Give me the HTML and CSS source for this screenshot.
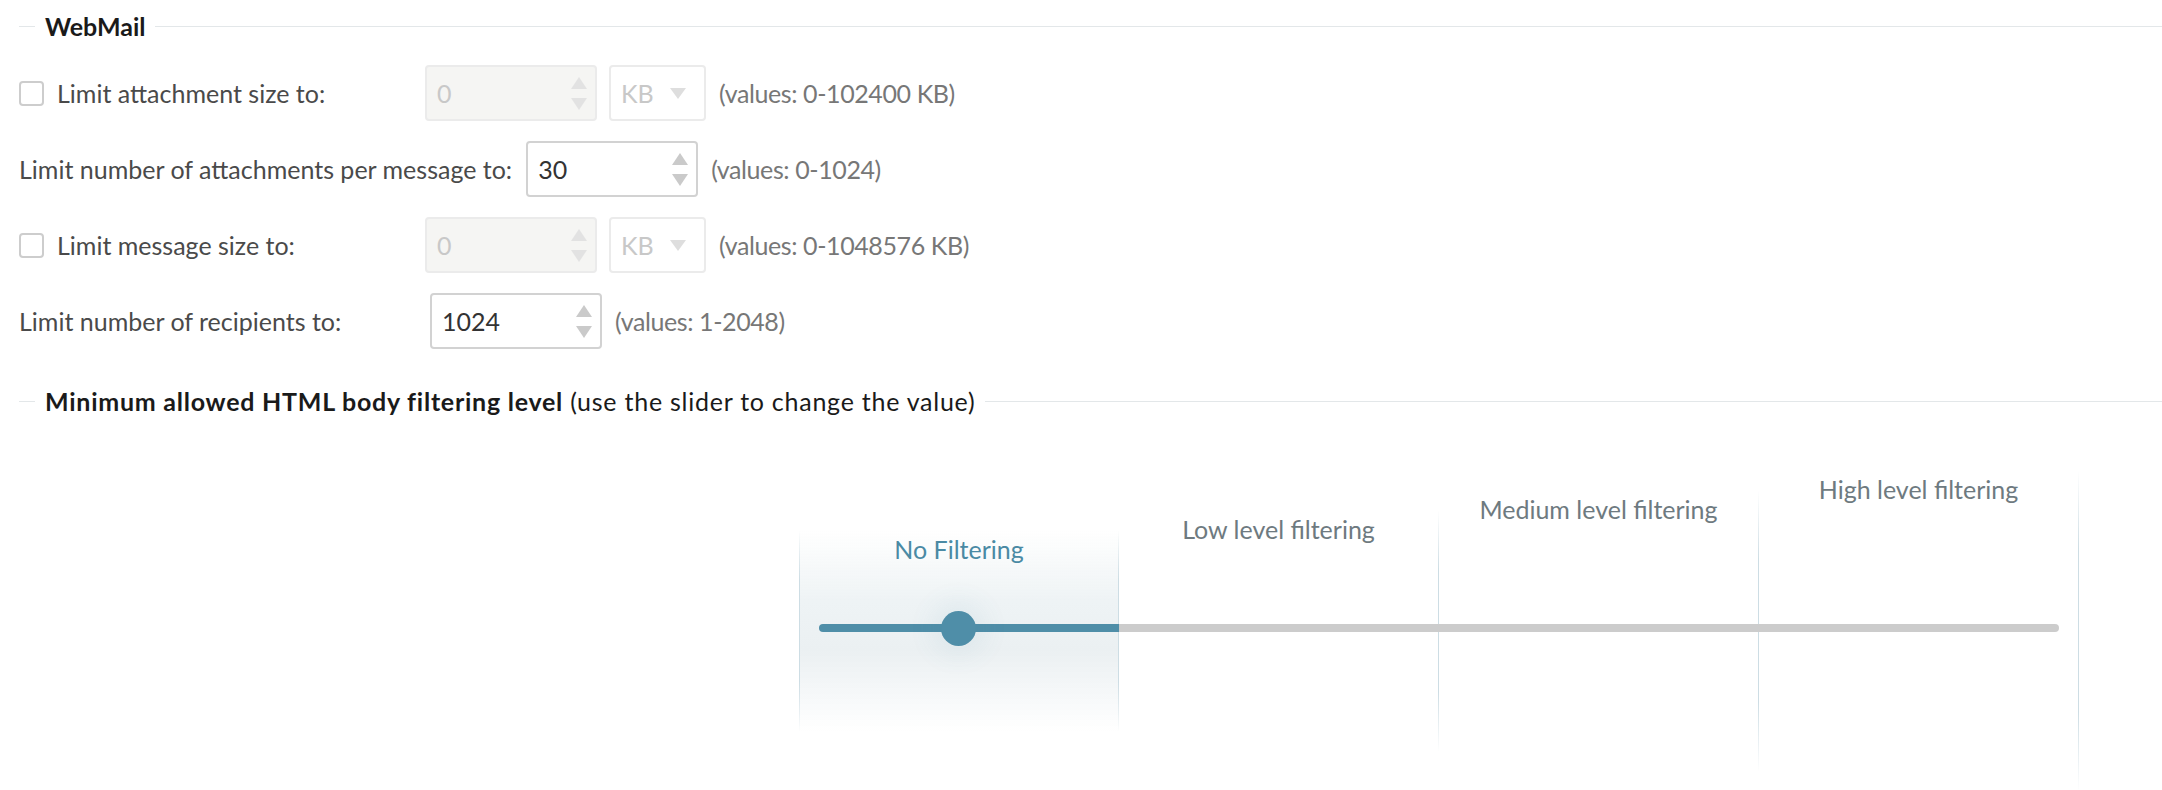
FILE: index.html
```html
<!DOCTYPE html>
<html>
<head>
<meta charset="utf-8"/>
<title>WebMail</title>
<link rel="stylesheet" href="styles.css">
</head>
<body>
<main class="page">
<fieldset class="group">
<legend>WebMail</legend>
<div class="row">
<label class="field-label"><input class="check" type="checkbox"/>Limit attachment size to:</label>
<div class="spin disabled"><input type="text" value="0" disabled/><span class="arrows"><i class="up"></i><i class="down"></i></span></div>
<div class="select disabled"><span>KB</span><i class="caret"></i></div>
<span class="hint">(values: 0-102400 KB)</span>
</div>
<div class="row">
<label class="field-label auto">Limit number of attachments per message to:</label>
<div class="spin"><input type="text" value="30"/><span class="arrows"><i class="up"></i><i class="down"></i></span></div>
<span class="hint">(values: 0-1024)</span>
</div>
<div class="row">
<label class="field-label"><input class="check" type="checkbox"/>Limit message size to:</label>
<div class="spin disabled"><input type="text" value="0" disabled/><span class="arrows"><i class="up"></i><i class="down"></i></span></div>
<div class="select disabled"><span>KB</span><i class="caret"></i></div>
<span class="hint">(values: 0-1048576 KB)</span>
</div>
<div class="row">
<label class="field-label wide">Limit number of recipients to:</label>
<div class="spin"><input type="text" value="1024"/><span class="arrows"><i class="up"></i><i class="down"></i></span></div>
<span class="hint">(values: 1-2048)</span>
</div>
</fieldset>
<fieldset class="group filter">
<legend><b>Minimum allowed HTML body filtering level</b> (use the slider to change the value)</legend>
<div class="levels">
<div class="level active"><span>No Filtering</span></div>
<div class="level"><span>Low level filtering</span></div>
<div class="level"><span>Medium level filtering</span></div>
<div class="level"><span>High level filtering</span></div>
<div class="track"><span class="thumb"></span></div>
</div>
</fieldset>
</main>
</body>
</html>
```
FILE: styles.css
```css
body {
margin: 0;
background-color: white;
color: #4a4a4a;
font-size: 25px;
}
* {
font-family: Lato, 'Noto Sans', sans-serif;
box-sizing: border-box;
}
.page {
padding: 11px 0 0 19px;
}
.group {
margin: 0;
padding: 24px 0 0 0;
min-width: 0;
border: 0;
border-top: 1px solid #e3e7e9;
}
.group legend {
margin-left: 16px;
padding: 0 10px;
line-height: 30px;
color: #1a1a1a;
font-weight: bold;
}
.group legend b {
font-weight: bold;
}
.filter {
margin-top: 37px;
padding-top: 55px;
}
.filter legend {
font-weight: normal;
letter-spacing: 0.75px;
}
.row {
display: flex;
align-items: center;
height: 56px;
}
.row + .row {
margin-top: 20px;
}
.field-label {
display: flex;
align-items: center;
width: 406px;
}
.field-label.auto {
width: auto;
margin-right: 14px;
}
.field-label.wide {
width: 411px;
}
.check {
appearance: none;
width: 25px;
height: 25px;
margin: 0 13px 0 0;
border: 2px solid #cdcdcd;
border-radius: 4px;
background: white;
}
.spin {
display: flex;
align-items: center;
width: 172px;
height: 56px;
border: 2px solid #d2d2d2;
border-radius: 4px;
background: white;
}
.spin input {
flex: 1;
min-width: 0;
border: 0;
outline: 0;
padding: 0 0 0 10px;
font-size: 25px;
color: #333;
background: transparent;
}
.arrows {
display: flex;
flex-direction: column;
gap: 9px;
margin-right: 8px;
}
.arrows i {
width: 0;
height: 0;
border-left: 8px solid transparent;
border-right: 8px solid transparent;
}
.arrows .up {
border-bottom: 12px solid #cacaca;
}
.arrows .down {
border-top: 12px solid #cacaca;
}
.spin.disabled {
border-color: #ebebeb;
background: #f5f5f3;
}
.spin.disabled input {
color: #c8c8c8;
}
.spin.disabled .up {
border-bottom-color: #e2e2e2;
}
.spin.disabled .down {
border-top-color: #e2e2e2;
}
.select {
display: flex;
align-items: center;
justify-content: space-between;
width: 97px;
height: 56px;
margin-left: 12px;
padding: 0 18px 0 10px;
border: 2px solid #ebebeb;
border-radius: 4px;
color: #c8c8c8;
}
.caret {
width: 0;
height: 0;
border-left: 8px solid transparent;
border-right: 8px solid transparent;
border-top: 11px solid #dedede;
}
.hint {
margin-left: 13px;
color: #777;
letter-spacing: -0.4px;
}
.levels {
position: relative;
display: flex;
align-items: center;
width: 1280px;
height: 320px;
margin-left: 780px;
}
.level {
width: 320px;
text-align: center;
color: #6e7a80;
border-style: solid;
border-width: 0 1px 0 0;
border-image: linear-gradient(to bottom, rgba(205, 221, 228, 0), #cddde4 25%, #cddde4 75%, rgba(205, 221, 228, 0)) 1;
}
.level span {
display: block;
padding-top: 3px;
line-height: 30px;
}
.level:nth-child(1) {
height: 200px;
border-left-width: 1px;
}
.level:nth-child(2) {
height: 240px;
}
.level:nth-child(3) {
height: 280px;
}
.level:nth-child(4) {
height: 320px;
}
.level.active {
color: #4a8aa4;
background: linear-gradient(to bottom, rgba(236, 241, 243, 0), #eef3f5 35%, #ebf0f2 60%, rgba(236, 241, 243, 0));
}
.track {
position: absolute;
left: 20px;
right: 20px;
top: 153px;
height: 8px;
border-radius: 4px;
background: linear-gradient(to right, #4f8ea8 300px, #cccccc 300px);
}
.thumb {
position: absolute;
left: 122px;
top: -13.5px;
width: 35px;
height: 35px;
border-radius: 50%;
background: #4f8ea8;
box-shadow: 0 0 26px 10px rgba(79, 142, 168, 0.08);
}
```
